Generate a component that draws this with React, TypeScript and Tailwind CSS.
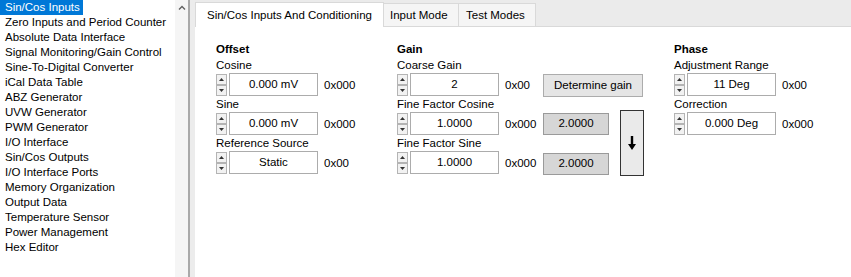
import React from "react"

const menu = [
  "Sin/Cos Inputs",
  "Zero Inputs and Period Counter",
  "Absolute Data Interface",
  "Signal Monitoring/Gain Control",
  "Sine-To-Digital Converter",
  "iCal Data Table",
  "ABZ Generator",
  "UVW Generator",
  "PWM Generator",
  "I/O Interface",
  "Sin/Cos Outputs",
  "I/O Interface Ports",
  "Memory Organization",
  "Output Data",
  "Temperature Sensor",
  "Power Management",
  "Hex Editor",
]

function SpinArrow({ up }: { up?: boolean }) {
  return (
    <div className="w-[11px] h-[11px] border border-[#b4b4b4] bg-[#f2f2f2] flex items-center justify-center">
      <svg width="5" height="3" viewBox="0 0 5 3">
        {up ? <path d="M0 3 L2.5 0 L5 3 Z" fill="#333" /> : <path d="M0 0 L2.5 3 L5 0 Z" fill="#333" />}
      </svg>
    </div>
  )
}

function SpinField({ value, hex }: { value: string; hex: string }) {
  return (
    <div className="flex h-[23px] items-center">
      <div className="flex flex-col">
        <SpinArrow up />
        <SpinArrow />
      </div>
      <div className="ml-[2px] w-[89px] h-[23px] border border-[#acacac] bg-white flex items-center justify-center">
        {value}
      </div>
      <div className="pl-[6px] pt-[3px]">{hex}</div>
    </div>
  )
}

function Label({ children, bold }: { children: React.ReactNode; bold?: boolean }) {
  return <div className={`h-[16px] leading-[17px] ${bold ? "font-bold" : ""}`}>{children}</div>
}

function ReadBox({ value }: { value: string }) {
  return (
    <div className="w-[66px] h-[22px] border border-[#9a9a9a] bg-[#d6d6d6] flex items-center justify-center">
      {value}
    </div>
  )
}

export default function App() {
  return (
    <div
      className="flex w-[851px] h-[277px] bg-white text-[11.5px] text-black overflow-hidden"
      style={{ fontFamily: '"Liberation Sans", Arial, sans-serif' }}
    >
      {/* tree list */}
      <div className="w-[175px] flex flex-col">
        {menu.map((m, i) => (
          <div key={m} className="h-[15px] leading-[15px] flex">
            <span className={i === 0 ? "bg-[#0078d7] text-white pl-[5px] pr-[3px]" : "pl-[5px]"}>{m}</span>
          </div>
        ))}
      </div>
      {/* scrollbar */}
      <div className="w-[13px] bg-[#f5f5f5] flex justify-center pt-[5px]">
        <svg width="8" height="5" viewBox="0 0 8 5">
          <path d="M1 4.5 L4 1.5 L7 4.5" stroke="#606060" strokeWidth="1.4" fill="none" />
        </svg>
      </div>
      {/* splitter */}
      <div className="w-[2px] bg-[#a9a9a9]" />
      <div className="w-[5px] bg-[#ececec]" />

      {/* tab control */}
      <div className="flex-1 flex flex-col">
        <div className="h-[27px] bg-[#ebebeb] flex items-end border-b border-[#d9d9d9]">
          <div className="h-[25px] w-[189px] bg-white border border-b-0 border-[#d9d9d9] pl-[11px] leading-[24px] -mb-px">
            Sin/Cos Inputs And Conditioning
          </div>
          <div className="h-[23px] w-[75px] bg-[#f5f5f5] border border-b-0 border-l-0 border-[#d9d9d9] pl-[6px] leading-[22px]">
            Input Mode
          </div>
          <div className="h-[23px] w-[77px] bg-[#f5f5f5] border border-b-0 border-l-0 border-[#d9d9d9] pl-[7px] leading-[22px]">
            Test Modes
          </div>
        </div>

        <div className="flex pt-[14px] pl-[21px]">
          {/* Offset */}
          <div className="w-[181px] flex flex-col">
            <Label bold>Offset</Label>
            <Label>Cosine</Label>
            <SpinField value="0.000 mV" hex="0x000" />
            <Label>Sine</Label>
            <SpinField value="0.000 mV" hex="0x000" />
            <Label>Reference Source</Label>
            <SpinField value="Static" hex="0x00" />
          </div>

          {/* Gain */}
          <div className="w-[277px] flex">
            <div className="w-[146px] flex flex-col">
              <Label bold>Gain</Label>
              <Label>Coarse Gain</Label>
              <SpinField value="2" hex="0x00" />
              <Label>Fine Factor Cosine</Label>
              <SpinField value="1.0000" hex="0x000" />
              <Label>Fine Factor Sine</Label>
              <SpinField value="1.0000" hex="0x000" />
            </div>
            <div className="flex flex-col pt-[33px]">
              <div className="w-[100px] h-[23px] border border-[#acacac] bg-[#e5e5e5] flex items-center justify-center">
                Determine gain
              </div>
              <div className="flex mt-[13px]">
                <div className="flex flex-col gap-[18px] pt-[3px]">
                  <ReadBox value="2.0000" />
                  <ReadBox value="2.0000" />
                </div>
                <div className="ml-[11px] w-[24px] h-[66px] border border-[#333] bg-[#eaeaea] flex items-center justify-center">
                  <svg width="8" height="14" viewBox="0 0 8 14">
                    <path d="M2.8 0 H5.2 V8 H8 L4 14 L0 8 H2.8 Z" fill="#000" />
                  </svg>
                </div>
              </div>
            </div>
          </div>

          {/* Phase */}
          <div className="flex flex-col">
            <Label bold>Phase</Label>
            <Label>Adjustment Range</Label>
            <SpinField value="11 Deg" hex="0x00" />
            <Label>Correction</Label>
            <SpinField value="0.000 Deg" hex="0x000" />
          </div>
        </div>
      </div>
    </div>
  )
}
